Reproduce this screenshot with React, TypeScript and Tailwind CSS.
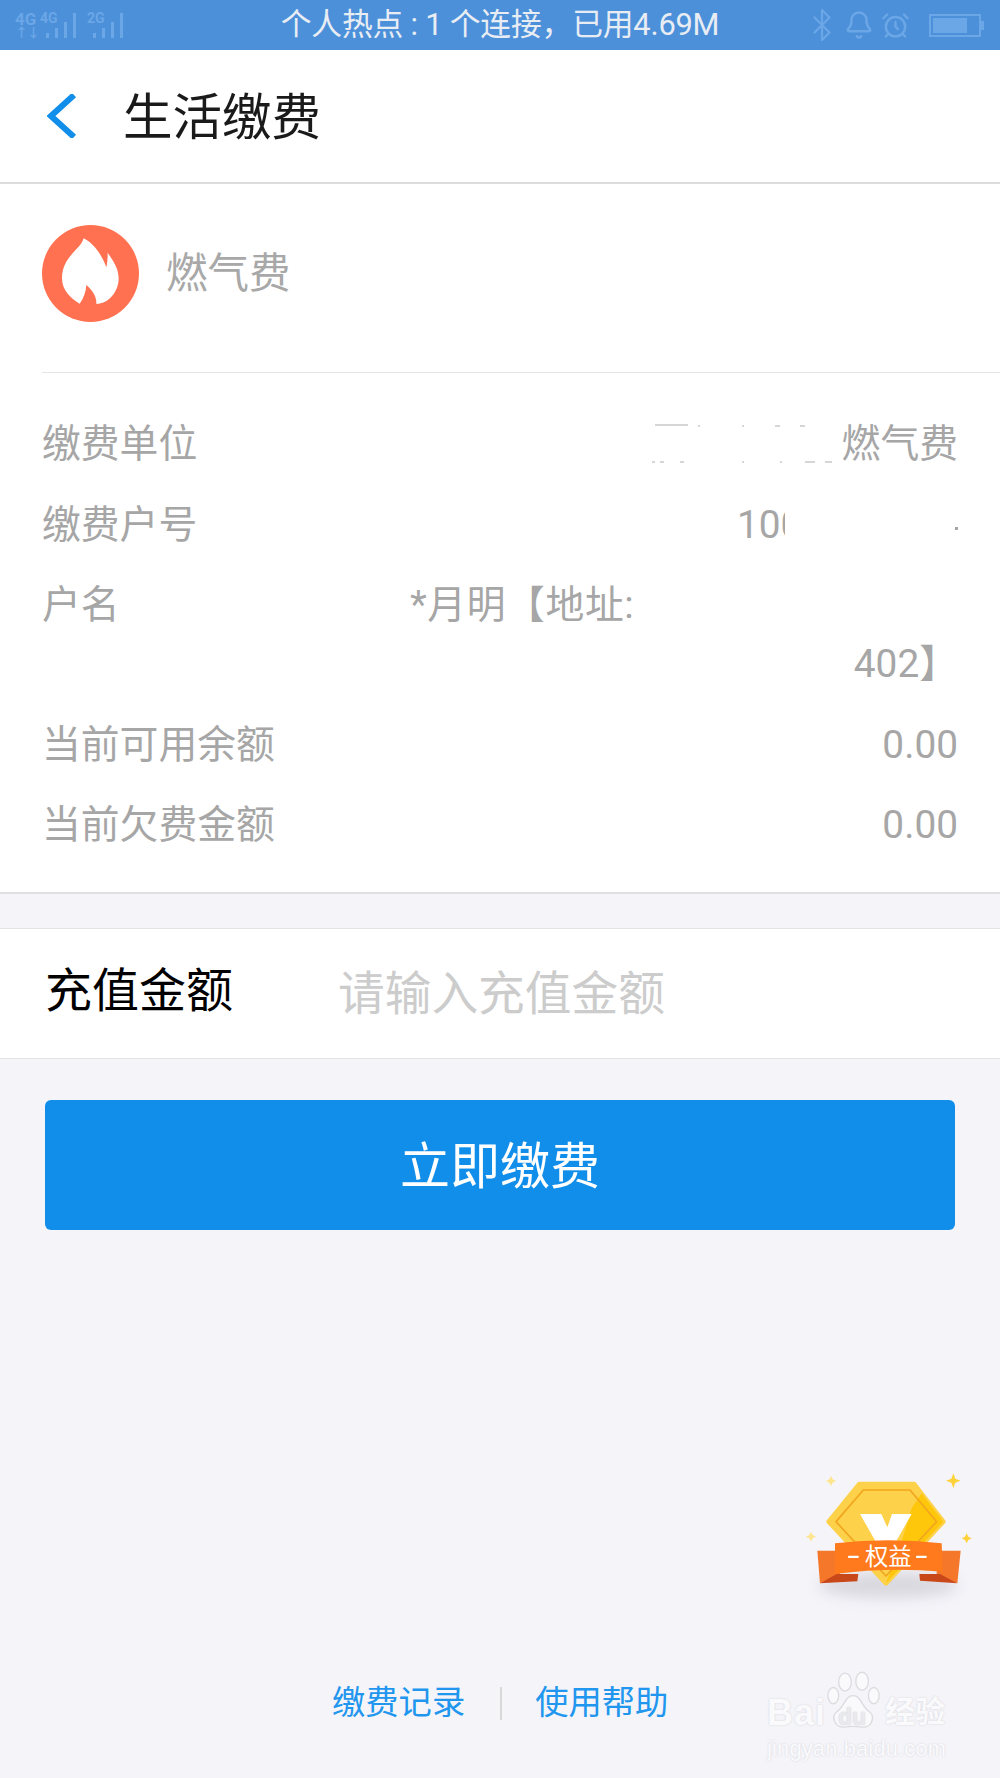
import { AlarmClock, Bell, Bluetooth } from 'lucide-react'

function SignalGroup({ label }: { label: string }) {
    const heights = [5, 10, 16, 25]
    return (
        <div className="relative w-[36px] h-[27px]">
            <span className="absolute left-0 top-0 text-[14px] leading-[14px]">{label}</span>
            <div className="absolute right-0 bottom-0 flex items-end gap-[6px]">
                {heights.map((h, i) => (
                    <div key={i} className="w-[3px] bg-[#6ba6e6]" style={{ height: h }} />
                ))}
            </div>
        </div>
    )
}

function StatusBar() {
    return (
        <div className="relative h-[50px] bg-[#4c90da] flex items-center justify-center">
            <div className="absolute left-[15px] top-[11px] flex items-start text-[#6ba6e6] font-bold">
                <div className="w-[25px] flex flex-col items-start text-[17px] leading-[16px]">
                    <span>4G</span>
                    <span className="text-[13px] leading-[12px] tracking-[-1px]">↑↓</span>
                </div>
                <SignalGroup label="4G" />
                <div className="ml-[11px]">
                    <SignalGroup label="2G" />
                </div>
            </div>
            <span className="text-[30.8px] leading-[36px] text-[#e8edf4] tracking-[-0.2px]">个人热点 : 1 个连接，已用4.69M</span>
            <div className="absolute left-[803px] top-[7px] flex items-center text-[#6ba6e6]">
                <Bluetooth className="w-[38px] h-[36px]" strokeWidth={1.5} />
                <Bell className="ml-[3px] w-[30px] h-[30px]" strokeWidth={2} />
                <AlarmClock className="ml-[7px] w-[29px] h-[29px]" strokeWidth={2} />
                <div className="ml-[19px] w-[52px] h-[23px] border-2 border-[#6ba6e6] p-[2px] flex">
                    <div className="w-[34px] bg-[#6ba6e6]" />
                </div>
                <div className="w-[3px] h-[9px] bg-[#6ba6e6]" />
            </div>
        </div>
    )
}

function FlameIcon() {
    return (
        <svg viewBox="0 0 291 291" className="w-[97px] h-[97px] shrink-0">
            <circle cx="145.5" cy="145.5" r="145.5" fill="#ff7150" />
            <path
                fill="#fff"
                d="M125 40C115 75 60 95 60 160C60 195 85 220 113 236C125 220 132 200 133 180C150 195 165 215 163 237C200 237 230 200 230 160C230 130 212 105 197 83C197 100 196 115 193 127C180 90 155 55 125 40Z"
            />
        </svg>
    )
}

function Row({ label, children }: { label: string; children: React.ReactNode }) {
    return (
        <div className="flex justify-between text-[38.8px] leading-[59px] text-[#a6a6a6]">
            <span>{label}</span>
            {children}
        </div>
    )
}

function Badge() {
    return (
        <svg viewBox="0 0 660 540" className="absolute left-[780px] top-[1450px] w-[220px] h-[180px]">
            <defs>
                <filter id="soft" x="-40%" y="-80%" width="180%" height="260%">
                    <feGaussianBlur stdDeviation="20" />
                </filter>
            </defs>
            <ellipse cx="325" cy="405" rx="210" ry="40" fill="#bdbdc4" opacity="0.5" filter="url(#soft)" />
            <path fill="#fdd24a" stroke="#fdd24a" strokeWidth="14" strokeLinejoin="round" d="M238 102H402L490 215L318 400L146 215Z" />
            <path fill="#ffc70b" d="M425 130L490 215L318 400L360 290L395 175Z" />
            <path fill="none" stroke="#f2a51e" strokeWidth="5" strokeLinejoin="round" d="M250 120H390L470 215L318 378L168 215Z" />
            <path fill="#fff" d="M240 192H304L322 232L336 192H395L345 280H290Z" />
            <path fill="#f5772a" d="M112 302H180V372L120 400Z" />
            <path fill="#f5772a" d="M542 302H470V372L532 400Z" />
            <path fill="#c9481a" d="M170 372L235 372L232 394L120 400Z" />
            <path fill="#c9481a" d="M480 372L418 372L420 392L532 400Z" />
            <path fill="#ff7a1c" d="M165 280Q325 262 485 280L488 365Q325 350 165 372Z" />
            <text x="325" y="346" textAnchor="middle" fill="#fff" fontSize="70" className="[font-family:'Noto_Sans_CJK_SC',sans-serif]">权益</text>
            <rect x="204" y="317" width="32" height="7" fill="#fff" rx="2" />
            <rect x="408" y="317" width="32" height="7" fill="#fff" rx="2" />
            <g fill="#ffd23c">
                <path d="M520 70L526 86L542 92L526 98L520 114L514 98L498 92L514 86Z" />
                <path fill="#fde58f" d="M153 78L158 88L168 93L158 98L153 108L148 98L138 93L148 88Z" />
                <path fill="#fde58f" d="M93 245L98 255L108 260L98 265L93 275L88 265L78 260L88 255Z" />
                <path d="M560 250L565 260L575 265L565 270L560 280L555 270L545 265L555 260Z" />
            </g>
        </svg>
    )
}

function Watermark() {
    return (
        <div className="absolute left-[767px] top-[1670px] w-[180px] h-[88px] text-[#fafafc] font-bold [text-shadow:0_0_2px_#cfcfd5]">
            <svg viewBox="0 0 60 66" className="absolute left-[60px] top-[1px] w-[54px] h-[60px]" fill="#fafafc" stroke="#dcdce0" strokeWidth="1.5">
                <ellipse cx="20" cy="12" rx="7" ry="10" />
                <ellipse cx="39" cy="11" rx="7" ry="10" />
                <ellipse cx="7" cy="27" rx="6" ry="9" />
                <ellipse cx="52" cy="27" rx="6" ry="9" />
                <path d="M29 27C20 27 20 39 11 45C4 50 9 63 19 62C25 61 33 61 39 62C50 63 54 50 47 45C38 39 38 27 29 27Z" />
            </svg>
            <span className="absolute left-0 top-[22px] text-[36px] leading-[42px] tracking-[1px] font-['Liberation_Sans']">Bai</span>
            <span className="absolute left-[71px] top-[33px] text-[23px] leading-[28px] text-[#e9e9ee] font-['Liberation_Sans']">du</span>
            <span className="absolute left-[118px] top-[24px] text-[30px] leading-[36px]">经验</span>
            <span className="absolute left-0 top-[66px] text-[21.8px] leading-[26px] font-normal tracking-[0.2px] font-['Liberation_Sans']">jingyan.baidu.com</span>
        </div>
    )
}

export default function App() {
    return (
        <div className="relative w-[1000px] h-[1778px] overflow-hidden bg-[#f4f4f9] [font-family:Roboto,'Noto_Sans_CJK_SC',sans-serif]">
            <StatusBar />

            {/* Header */}
            <div className="h-[134px] bg-white border-b-2 border-[#dcdcdc] flex items-center">
                <svg viewBox="0 0 30 44" className="ml-[47px] w-[30px] h-[44px]" fill="none" stroke="#118eea" strokeWidth="6">
                    <polyline points="27,1 4,22 27,43" />
                </svg>
                <span className="ml-[46px] mt-[3px] text-[49.5px] leading-[60px] text-[#1a1a1a]">生活缴费</span>
            </div>

            {/* Bill details */}
            <div className="bg-white border-b-2 border-[#e0e0e0]">
                <div className="h-[188px] pl-[42px] flex items-center pb-[10px]">
                    <FlameIcon />
                    <span className="ml-[27px] mt-[2px] text-[41.5px] leading-[50px] text-[#a8a8a8]">燃气费</span>
                </div>
                <div className="ml-[42px] border-t border-[#e5e5e5] pt-[41px] pb-[38px] pr-[42px] flex flex-col gap-[21.5px]">
                    <Row label="缴费单位">
                        <span className="flex items-center">
                            <svg viewBox="0 0 190 44" className="w-[190px] h-[44px] mr-[2px]" stroke="#c9c9c9" strokeWidth="1.5">
                                <path d="M5 3H38M48 4H50M92 4H94M125 4H130M150 4H155M2 40H5M10 40H14M30 40H34M92 40H94M130 40H132M155 40H165M175 40H182" />
                            </svg>
                            燃气费
                        </span>
                    </Row>
                    <Row label="缴费户号">
                        <span className="flex items-center">
                            <span className="w-[48px] overflow-hidden whitespace-nowrap">100</span>
                            <span className="ml-[170px] w-[3px] h-[3px] mt-[8px] bg-[#a6a6a6]" />
                        </span>
                    </Row>
                    <Row label="户名">
                        <div className="w-[548px]">
                            <div className="tracking-[0.6px]">*月明【地址:</div>
                            <div className="text-right">402】</div>
                        </div>
                    </Row>
                    <Row label="当前可用余额">
                        <span>0.00</span>
                    </Row>
                    <Row label="当前欠费金额">
                        <span>0.00</span>
                    </Row>
                </div>
            </div>

            {/* Amount input */}
            <div className="mt-[34px] h-[131px] bg-white border-y border-[#e3e3e3] flex items-center pl-[45px]">
                <span className="w-[293px] mb-[6px] text-[47px] leading-[60px] text-black">充值金额</span>
                <span className="text-[46.7px] leading-[60px] text-[#cccccc]">请输入充值金额</span>
            </div>

            <div className="mt-[41px] mx-[45px] h-[130px] rounded-[6px] bg-[#118eea] flex items-center justify-center">
                <span className="mt-[3px] text-[50px] leading-[60px] text-white">立即缴费</span>
            </div>

            {/* Footer links */}
            <div className="mt-[453px] pl-[332px] flex items-center text-[33.3px] leading-[40px] text-[#2196ee]">
                <span>缴费记录</span>
                <div className="ml-[35px] w-[2px] h-[33px] bg-[#d8d8d8]" />
                <span className="ml-[33px]">使用帮助</span>
            </div>

            <Badge />
            <Watermark />
        </div>
    )
}
